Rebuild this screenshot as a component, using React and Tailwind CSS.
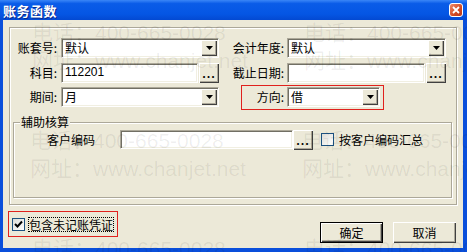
import React from 'react';

const font = "font-['Noto_Sans_CJK_SC','Noto_Sans',sans-serif]";

// classic sunken field
const sunken = 'bg-white border border-t-[#ACA899] border-l-[#ACA899] border-b-white border-r-white shadow-[inset_1px_1px_0_#716F64,inset_-1px_-1px_0_#F1EFE2]';
// classic raised button
const raised = 'bg-[#ECE9D8] shadow-[inset_1px_1px_0_#fff,inset_-1px_-1px_0_#404040,inset_-2px_-2px_0_#ACA899]';
const etched = 'border border-[#ACA899] shadow-[inset_1px_1px_0_#fff,1px_1px_0_#fff]';

const Label = ({ w, children }) => (
  <div className={`${w} text-right text-[12px] leading-[20px] text-black shrink-0`}>{children}</div>
);

const Combo = ({ w, value }) => (
  <div className={`${w} h-[20px] ${sunken} flex items-stretch p-[1px] shrink-0`}>
    <div className="flex-1 pl-[2px] text-[12px] leading-[16px] text-black">{value}</div>
    <div className={`w-[16px] ${raised} flex items-center justify-center`}>
      <svg width="7" height="4" viewBox="0 0 7 4"><path d="M0 0h7L3.5 4z" fill="#000" /></svg>
    </div>
  </div>
);

const Dots = () => (
  <div className={`w-[20px] h-[20px] ${raised} flex items-end justify-center pb-[4px] shrink-0`}>
    <span className="text-[11px] leading-none font-bold tracking-[1px] text-black">...</span>
  </div>
);

const Field = ({ w, value, h = 'h-[20px]' }) => (
  <div className={`${w} ${h} ${sunken} pl-[3px] text-[12px] leading-[17px] text-black font-['Liberation_Sans','Noto_Sans_CJK_SC',sans-serif] shrink-0`}>
    {value}
  </div>
);

const Check = ({ checked }) => (
  <div className="w-[13px] h-[13px] border border-[#1C5180] bg-[linear-gradient(135deg,#DCDCD7,#fff)] flex items-center justify-center shrink-0">
    {checked && (
      <svg width="9" height="9" viewBox="0 0 9 9">
        <path d="M1 4l2.5 2.5L8 1.5" stroke="#000" strokeWidth="2" fill="none" />
      </svg>
    )}
  </div>
);

const marks = [
  [32, 19], [304, 19],
  [30, 127], [302, 127],
  [32, 235], [304, 235],
];

export default function App() {
  return (
    <div className={`relative w-[467px] h-[252px] bg-[#0A4FDB] flex flex-col overflow-hidden ${font}`}>
      {/* title bar */}
      <div className="h-[20px] shrink-0 flex items-center justify-between pl-[3px] pr-[4px] bg-[linear-gradient(to_bottom,#3A86F7_0%,#0A5CE8_18%,#0556E4_70%,#0349D2_100%)]">
        <span className="text-white text-[13px] font-bold leading-none tracking-[0.5px] [text-shadow:1px_1px_0_#0A2A8C]">账务函数</span>
        <div className="w-[14px] h-[14px] rounded-[3px] border border-white bg-[linear-gradient(135deg,#EE8A6A,#D24A22_60%,#B8381A)] flex items-center justify-center">
          <svg width="8" height="8" viewBox="0 0 8 8">
            <path d="M1 1l6 6M7 1L1 7" stroke="#fff" strokeWidth="1.8" />
          </svg>
        </div>
      </div>

      {/* client area */}
      <div className="flex-1 ml-[3px] mr-[4px] mb-[4px] bg-[#ECE9D8] flex flex-col">
        <div className={`ml-[6px] mt-[7px] w-[448px] h-[178px] ${etched} pt-[10px] flex flex-col`}>
          <div className="flex items-center h-[20px]">
            <Label w="w-[47px]">账套号:</Label>
            <div className="ml-[4px]"><Combo w="w-[158px]" value="默认" /></div>
            <Label w="w-[65px]">会计年度:</Label>
            <div className="ml-[3px]"><Combo w="w-[159px]" value="默认" /></div>
          </div>

          <div className="flex items-center h-[20px] mt-[5px]">
            <Label w="w-[47px]">科目:</Label>
            <div className="ml-[4px] w-[158px] flex gap-[1px]">
              <Field w="w-[137px]" value="112201" />
              <Dots />
            </div>
            <Label w="w-[65px]">截止日期:</Label>
            <div className="ml-[3px] w-[159px] flex gap-[1px]">
              <Field w="w-[138px]" value="" />
              <Dots />
            </div>
          </div>

          <div className="flex items-center h-[20px] mt-[4px]">
            <Label w="w-[47px]">期间:</Label>
            <div className="ml-[4px]"><Combo w="w-[158px]" value="月" /></div>
            <div className="ml-[22px] h-[25px] border border-[#E0211D] flex items-center pr-[3px]">
              <Label w="w-[42px]">方向:</Label>
              <div className="ml-[3px]"><Combo w="w-[93px]" value="借" /></div>
            </div>
          </div>

          <div className={`relative ml-[3px] mt-[15px] w-[439px] h-[76px] ${etched} pt-[7px]`}>
            <span className="absolute -top-[9px] left-[6px] px-[1px] bg-[#ECE9D8] text-[12px] leading-[16px] text-black">辅助核算</span>
            <div className="flex items-center h-[19px]">
              <div className="pl-[33px] w-[81px] text-[12px] leading-[19px] text-black shrink-0">客户编码</div>
              <div className="ml-[25px]"><Field w="w-[173px]" h="h-[19px]" value="" /></div>
              <Dots />
              <div className="ml-[8px]"><Check /></div>
              <span className="ml-[5px] text-[12px] leading-[19px] text-black">按客户编码汇总</span>
            </div>
          </div>
        </div>

        <div className="flex items-start justify-between">
          <div className="ml-[5px] mt-[6px] w-[110px] h-[26px] border border-[#E0211D] flex items-center pl-[3px]">
            <Check checked />
            <span className="ml-[3px] px-[1px] outline-1 outline-dotted outline-black -outline-offset-1 text-[12px] leading-[15px] text-black">包含未记账凭证</span>
          </div>
          <div className="mt-[17px] mr-[7px] flex gap-[10px]">
            <div className="w-[63px] h-[21px] border border-black flex items-center justify-center">
              <div className={`w-full h-full ${raised} text-[12px] leading-[19px] text-center text-black`}>确定</div>
            </div>
            <div className={`w-[63px] h-[21px] ${raised} text-[12px] leading-[21px] text-center text-black`}>取消</div>
          </div>
        </div>
      </div>

      {/* watermark */}
      <div className="absolute inset-0 pointer-events-none">
        {marks.map(([x, y]) => (
          <div
            key={`${x}-${y}`}
            className="absolute text-[21px] leading-[28px] whitespace-nowrap text-black/[0.07] font-['Liberation_Sans','Noto_Sans_CJK_SC',sans-serif]"
            style={{ left: x, top: y }}
          >
            <div>电话：400-665-0028</div>
            <div>网址：www.chanjet.net</div>
          </div>
        ))}
      </div>
    </div>
  );
}
